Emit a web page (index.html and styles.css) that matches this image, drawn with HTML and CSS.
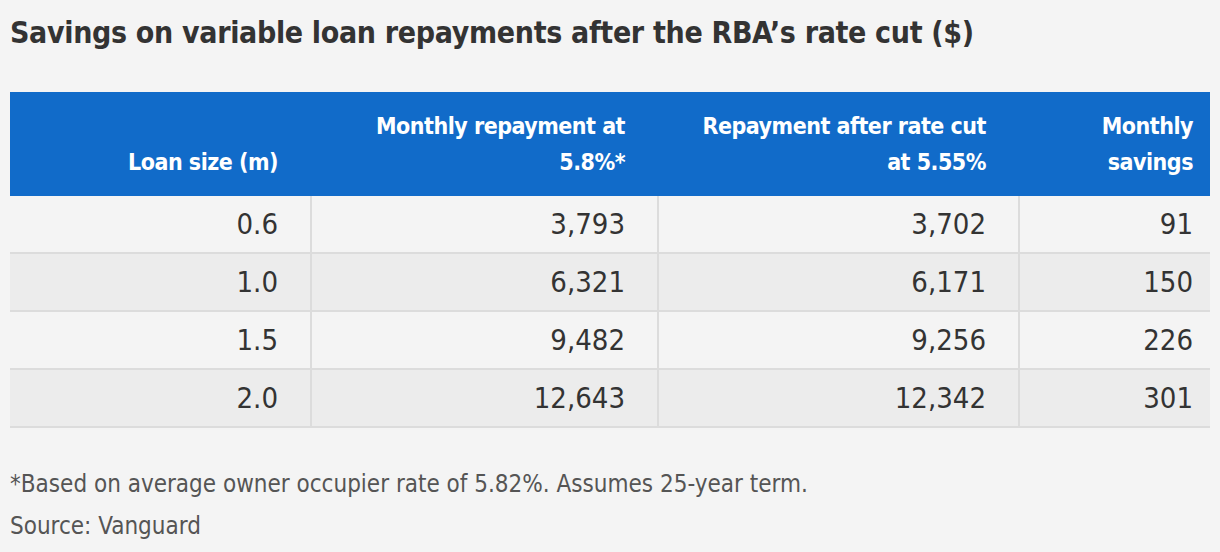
FILE: index.html
```html
<!DOCTYPE html>
<html>
<head>
<meta charset="utf-8">
<link rel="stylesheet" href="styles.css">
</head>
<body>
<div class="wrap">
  <h1 class="title">Savings on variable loan repayments after the RBA’s rate cut ($)</h1>
  <table class="data">
    <thead>
      <tr>
        <th class="c1">Loan size (m)</th>
        <th class="c2">Monthly repayment at<br>5.8%*</th>
        <th class="c3">Repayment after rate cut<br>at 5.55%</th>
        <th class="c4">Monthly<br>savings</th>
      </tr>
    </thead>
    <tbody>
      <tr><td>0.6</td><td>3,793</td><td>3,702</td><td>91</td></tr>
      <tr><td>1.0</td><td>6,321</td><td>6,171</td><td>150</td></tr>
      <tr><td>1.5</td><td>9,482</td><td>9,256</td><td>226</td></tr>
      <tr><td>2.0</td><td>12,643</td><td>12,342</td><td>301</td></tr>
    </tbody>
  </table>
  <div class="notes">
    <p class="note">*Based on average owner occupier rate of 5.82%. Assumes 25-year term.</p>
    <p class="note">Source: Vanguard</p>
  </div>
</div>
</body>
</html>
```
FILE: styles.css
```css
html, body {
  margin: 0;
  padding: 0;
  background: #f4f4f4;
}
body {
  font-family: "DejaVu Sans Condensed", "Liberation Sans Narrow", sans-serif;
  color: #333;
}
.wrap {
  padding: 0 10px;
}
.title {
  margin: 0;
  padding-top: 15px;
  height: 92px;
  box-sizing: border-box;
  font-size: 30px;
  line-height: 36px;
  letter-spacing: -0.33px;
  font-weight: bold;
  color: #333;
}
.data {
  width: 1200px;
  border-collapse: collapse;
  table-layout: fixed;
}
.data th {
  background: #116bc9;
  color: #fff;
  font-size: 23px;
  line-height: 36px;
  letter-spacing: -0.5px;
  font-weight: bold;
  text-align: right;
  vertical-align: bottom;
  height: 104px;
  box-sizing: border-box;
  padding: 0 33px 16px 0;
}
.data th.c1 { width: 301px; }
.data th.c2 { width: 347px; }
.data th.c3 { width: 361px; }
.data th.c4 { width: 191px; padding-right: 17px; }
.data td {
  height: 56px;
  padding: 0 32px 0 0;
  text-align: right;
  font-size: 29px;
  color: #333;
  border-bottom: 2px solid #dcdcdc;
  border-left: 2px solid #dcdcdc;
}
.data td:first-child { border-left: none; }
.data td:last-child { padding-right: 17px; }
.data tbody tr:nth-child(even) td { background: #ececec; }
.notes {
  padding-top: 35px;
}
.note {
  margin: 0;
  font-size: 24px;
  line-height: 42px;
  color: #555;
}
```
